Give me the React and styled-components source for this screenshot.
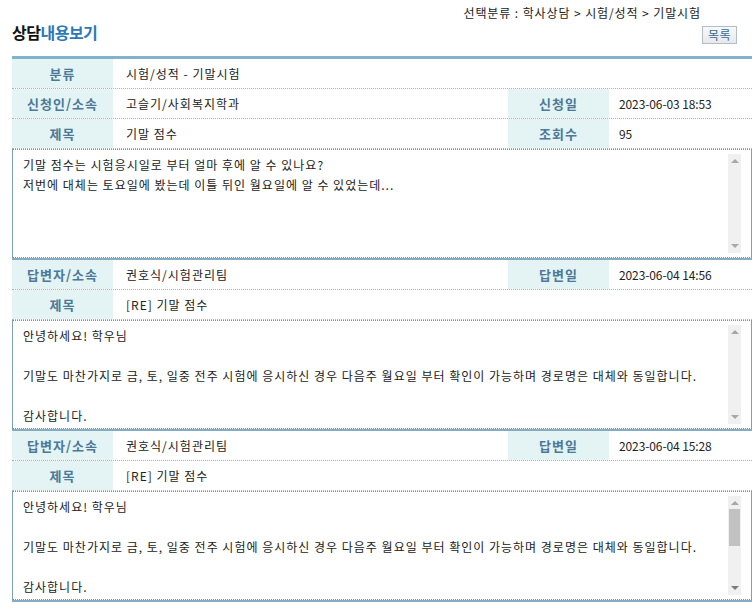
import React from 'react'
import styled, { createGlobalStyle } from 'styled-components'

const GlobalStyle = createGlobalStyle`
  html, body {
    margin: 0;
    padding: 0;
    background: #fff;
  }
  body {
    font-family: "Noto Sans CJK KR", "Noto Sans", sans-serif;
    font-size: 12px;
    color: #222;
  }
`

const Page = styled.div`
  width: 756px;
  padding: 4px 4px 0 12px;
  box-sizing: border-box;
`

const Header = styled.div`
  display: flex;
  justify-content: space-between;
  align-items: flex-end;
  height: 50px;
  padding-bottom: 2px;
`

const Title = styled.h1`
  margin: 0 0 12px;
  font-size: 16px;
  font-weight: 700;
  letter-spacing: -0.5px;
  color: #111;
  line-height: 20px;

  span {
    color: #2b78b8;
  }
`

const HeaderRight = styled.div`
  display: flex;
  flex-direction: column;
  align-items: flex-end;
  gap: 5px;
  padding-right: 15px;
  padding-bottom: 10px;
`

const Breadcrumb = styled.div`
  margin-right: 36px;
  line-height: 16px;
  letter-spacing: 0.9px;
  color: #222;
`

const ListButton = styled.button`
  font-family: inherit;
  font-size: 12px;
  line-height: 14px;
  color: #3a6a94;
  background: linear-gradient(#f7f8fa, #e6e9ec);
  border: 1px solid #b4bcc4;
  padding: 1px 5px;
  letter-spacing: 0.5px;
  cursor: pointer;
`

const Board = styled.div`
  border-top: 3px solid #83b3ca;
`

const Row = styled.div`
  display: grid;
  grid-template-columns: 101px 395px 101px 1fr;
  height: 29px;
  border-bottom: 1px dotted #a9b4bc;
  align-items: stretch;
`

const Label = styled.div`
  display: flex;
  align-items: center;
  justify-content: center;
  background: #e4f3f3;
  color: #4a799a;
  font-weight: 700;
  font-size: 13px;
  letter-spacing: 1px;
`

const Value = styled.div`
  display: flex;
  align-items: center;
  padding-left: ${p => (p.$wide ? '13px' : '10px')};
  grid-column: ${p => (p.$span ? 'span 3' : 'auto')};
  letter-spacing: ${p => (p.$num ? '-0.1px' : '1px')};
  color: #222;
`

const ContentBox = styled.div`
  display: flex;
  height: 107px;
  border-top: 1px dotted #5f9ea8;
  border-left: 1px solid #7f9fb4;
  border-right: 1px solid #7f9fb4;
  border-bottom: 1px dotted #5f9ea8;
  box-shadow: 0 2px 0 #84acc2;
  margin-bottom: 2px;
  overflow: hidden;
`

const ContentText = styled.div`
  flex: 1;
  padding: 5px 10px 0;
  line-height: 20px;
  letter-spacing: 1px;
  white-space: pre-wrap;
  color: #222;
`

const Scrollbar = styled.div`
  width: 13px;
  margin: 4px 10px 4px 0;
  background: #f0f0f0;
  display: flex;
  flex-direction: column;
  align-items: center;
  justify-content: space-between;
  padding: 5px 0;
  box-sizing: border-box;
`

const Arrow = styled.div`
  width: 0;
  height: 0;
  border-left: 4px solid transparent;
  border-right: 4px solid transparent;
  ${p => (p.$down
    ? `border-top: 4px solid ${p.$dark ? '#7a7a7a' : '#a8a8a8'};`
    : 'border-bottom: 4px solid #a8a8a8;')}
`

const Track = styled.div`
  flex: 1;
  width: 100%;
  padding: 4px 1px;
  box-sizing: border-box;
`

const Thumb = styled.div`
  height: 37px;
  background: #c1c1c1;
`

function Content({ text, thumb }) {
  return (
    <ContentBox>
      <ContentText>{text}</ContentText>
      <Scrollbar>
        <Arrow />
        <Track>{thumb && <Thumb />}</Track>
        <Arrow $down $dark={thumb} />
      </Scrollbar>
    </ContentBox>
  )
}

const answerText =
  '안녕하세요! 학우님\n\n기말도 마찬가지로 금, 토, 일중 전주 시험에 응시하신 경우 다음주 월요일 부터 확인이 가능하며 경로명은 대체와 동일합니다.\n\n감사합니다.'

const answers = [
  { name: '권호식/시험관리팀', date: '2023-06-04 14:56', subject: '[RE] 기말 점수', thumb: false },
  { name: '권호식/시험관리팀', date: '2023-06-04 15:28', subject: '[RE] 기말 점수', thumb: true },
]

export default function App() {
  return (
    <Page>
      <GlobalStyle />
      <Header>
        <Title>
          상담<span>내용보기</span>
        </Title>
        <HeaderRight>
          <Breadcrumb>선택분류 : 학사상담 &gt; 시험/성적 &gt; 기말시험</Breadcrumb>
          <ListButton>목록</ListButton>
        </HeaderRight>
      </Header>

      <Board>
        <Row>
          <Label>분류</Label>
          <Value $wide $span>시험/성적 - 기말시험</Value>
        </Row>
        <Row>
          <Label>신청인/소속</Label>
          <Value $wide>고슬기/사회복지학과</Value>
          <Label>신청일</Label>
          <Value $num>2023-06-03 18:53</Value>
        </Row>
        <Row>
          <Label>제목</Label>
          <Value $wide>기말 점수</Value>
          <Label>조회수</Label>
          <Value $num>95</Value>
        </Row>
        <Content
          text={'기말 점수는 시험응시일로 부터 얼마 후에 알 수 있나요?\n저번에 대체는 토요일에 봤는데 이틀 뒤인 월요일에 알 수 있었는데...'}
        />

        {answers.map((a, i) => (
          <React.Fragment key={i}>
            <Row>
              <Label>답변자/소속</Label>
              <Value $wide>{a.name}</Value>
              <Label>답변일</Label>
              <Value $num>{a.date}</Value>
            </Row>
            <Row>
              <Label>제목</Label>
              <Value $wide $span>{a.subject}</Value>
            </Row>
            <Content text={answerText} thumb={a.thumb} />
          </React.Fragment>
        ))}
      </Board>
    </Page>
  )
}
